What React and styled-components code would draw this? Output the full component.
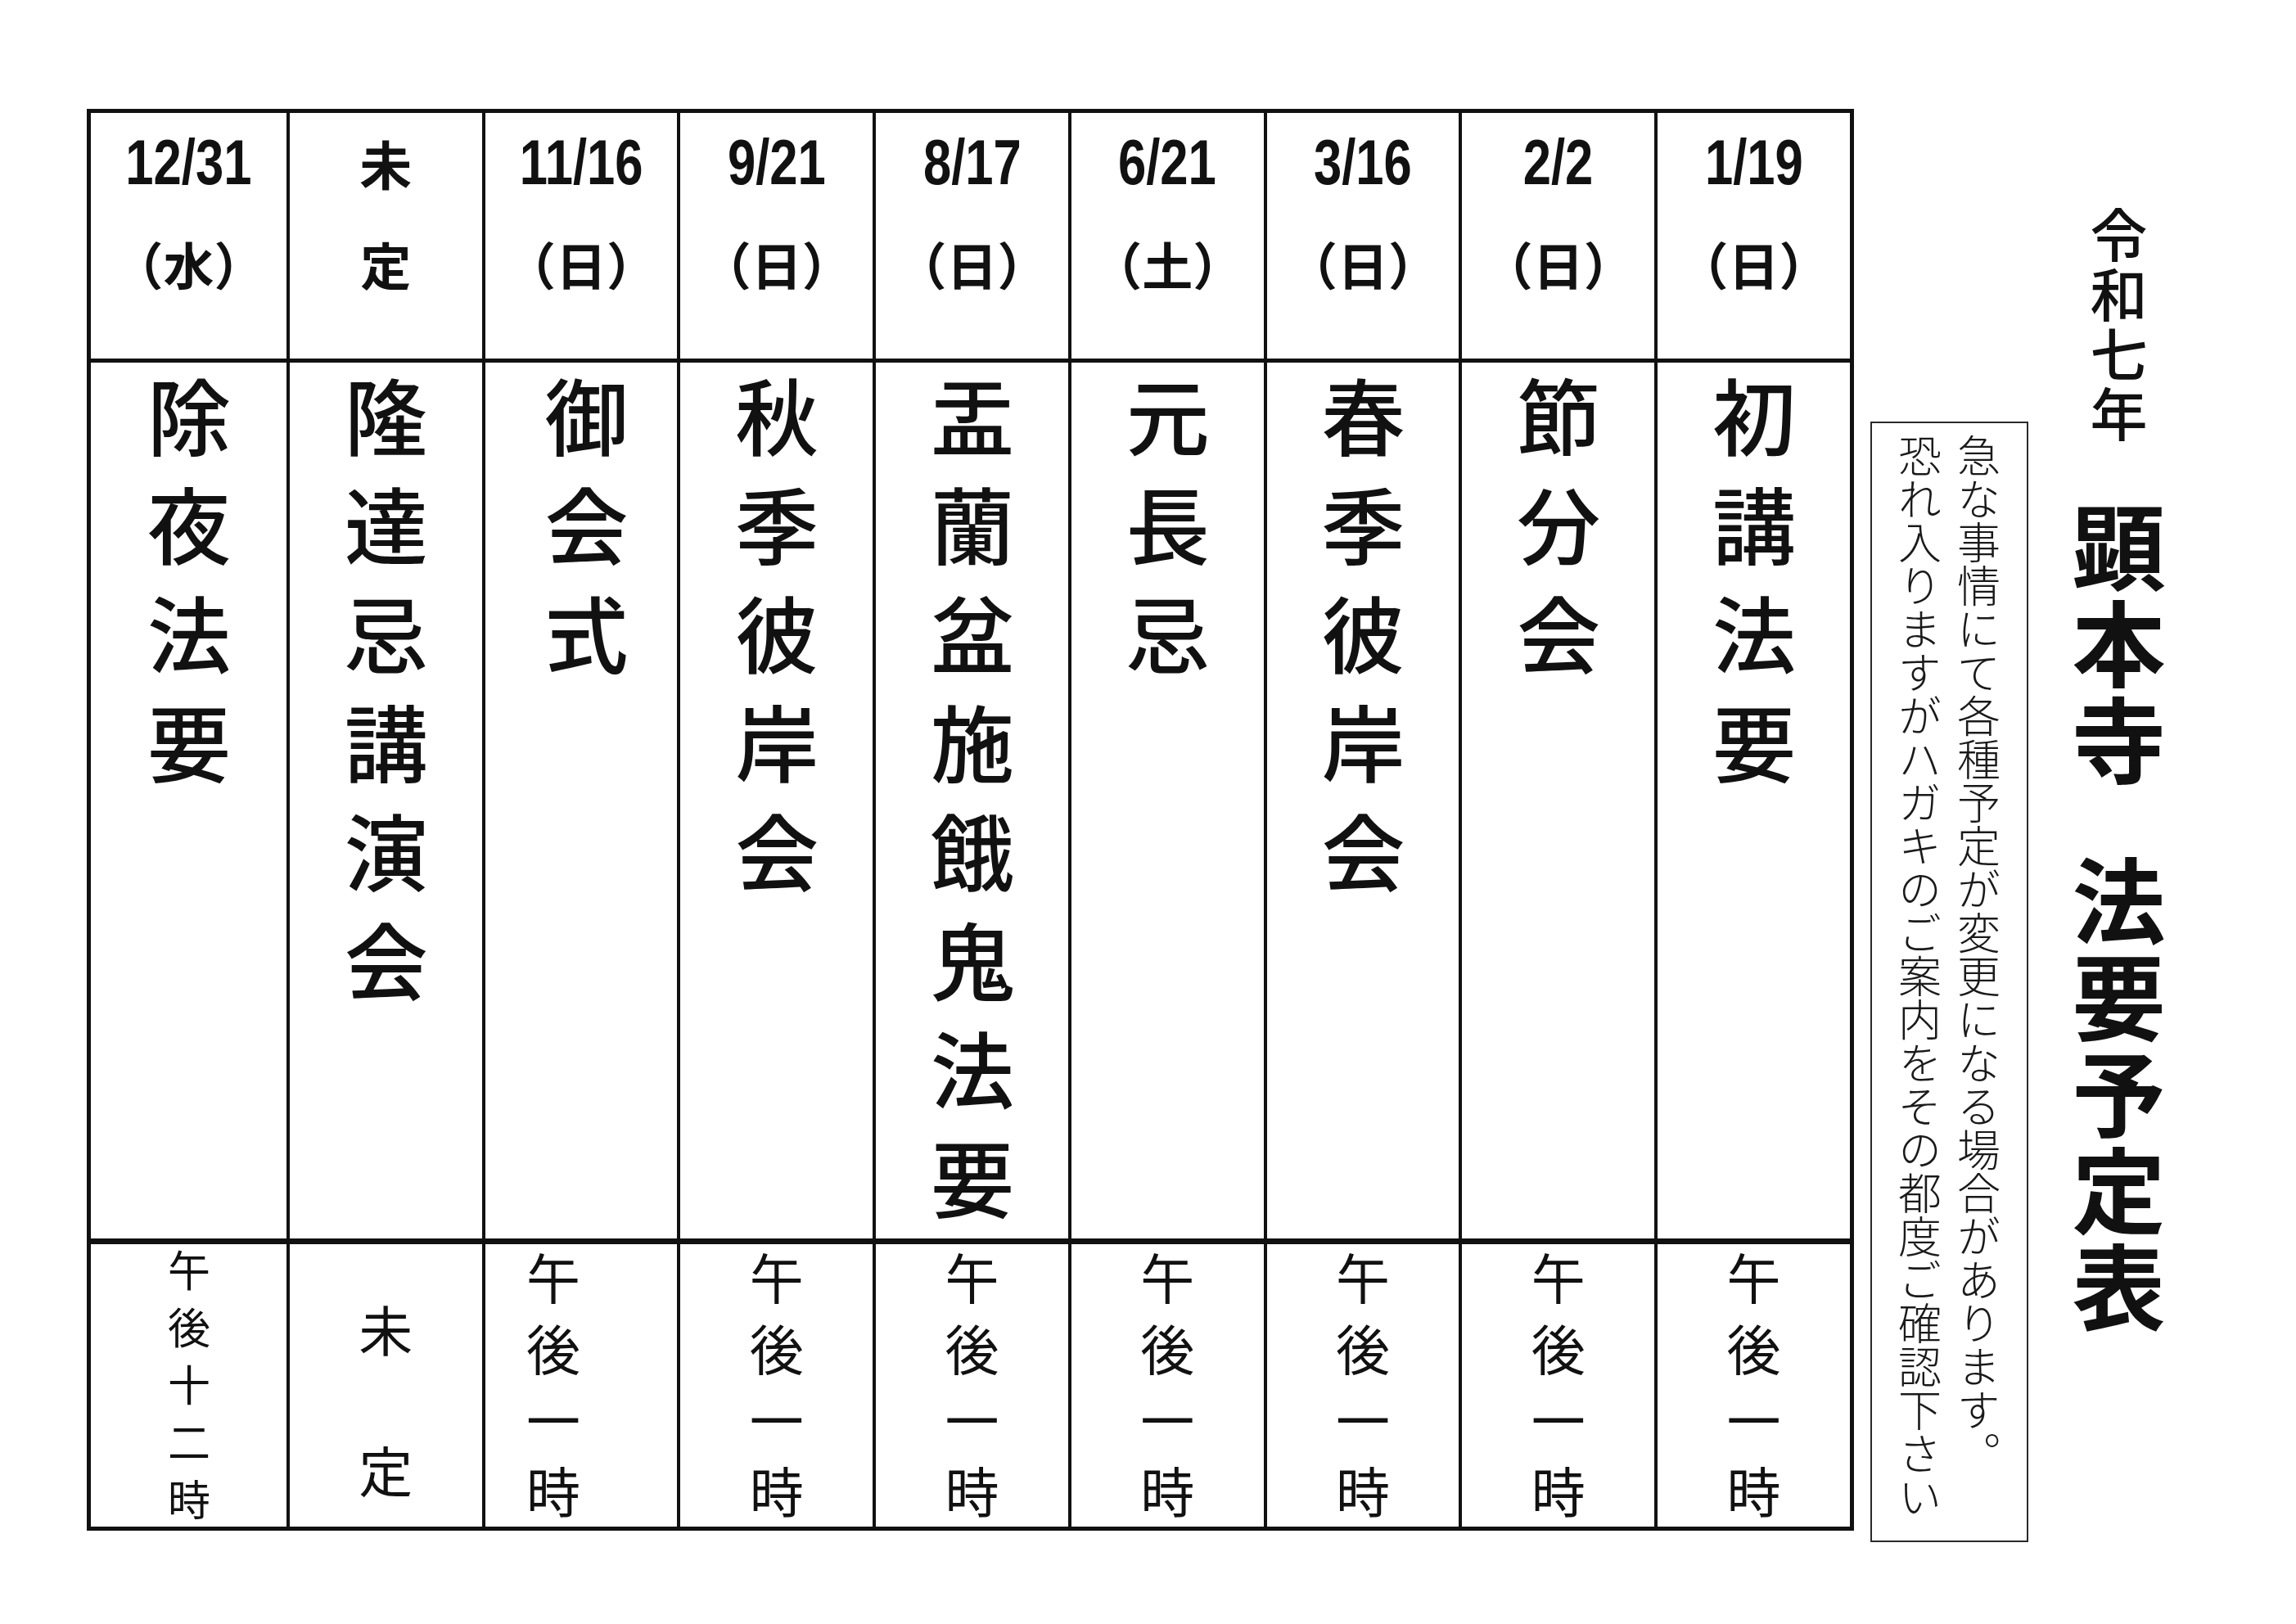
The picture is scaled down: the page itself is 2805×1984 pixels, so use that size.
import React from "react";
import styled, { createGlobalStyle } from "styled-components";

const GlobalStyle = createGlobalStyle`
  html, body {
    margin: 0;
    padding: 0;
    background: #ffffff;
  }
  body {
    font-family: "Noto Sans CJK JP", "Noto Sans", sans-serif;
    color: #111;
  }
`;

const CJK = `"Noto Sans CJK JP", "Noto Sans CJK SC", sans-serif`;

const Page = styled.main`
  width: 2805px;
  height: 1984px;
  box-sizing: border-box;
  display: flex;
  align-items: flex-start;
  padding: 133px 0 0 106px;
  background: #fff;
`;

const Schedule = styled.section`
  display: grid;
  grid-template-columns: repeat(9, 1fr);
  grid-template-rows: 300px 1075px 352px;
  grid-auto-flow: column;
  width: 2159px;
  box-sizing: border-box;
  border: 5px solid #111;
  flex: none;
`;

const Cell = styled.div`
  box-sizing: border-box;
  border-left: ${(p) => (p.$first ? 0 : 4)}px solid #111;
  display: flex;
  min-width: 0;
  overflow: visible;
`;

const HeaderCell = styled(Cell)`
  flex-direction: column;
  align-items: center;
  padding-top: 22px;
`;

const DateLabel = styled.span`
  display: inline-block;
  font-family: "Liberation Sans", Arial, sans-serif;
  font-weight: 700;
  font-size: 77px;
  line-height: 76px;
  height: 76px;
  transform: scaleX(0.8);
  white-space: nowrap;
`;

const KanjiLabel = styled.span`
  display: inline-block;
  font-family: ${CJK};
  font-weight: 700;
  font-size: 64px;
  line-height: 76px;
  height: 76px;
`;

const DayLabel = styled.span`
  display: inline-block;
  margin-top: 55px;
  font-family: ${CJK};
  font-weight: 700;
  font-size: 62px;
  line-height: 62px;
  white-space: nowrap;
`;

const BodyCell = styled(Cell)`
  border-top: 5px solid #111;
  justify-content: center;
  align-items: flex-start;
  padding-top: 16px;
`;

const EventName = styled.span`
  flex: none;
  writing-mode: vertical-rl;
  white-space: nowrap;
  font-family: ${CJK};
  font-weight: 500;
  font-size: 102px;
  line-height: 1;
  letter-spacing: 31px;
  margin-left: ${(p) => p.$nudge || 0}px;
`;

const FooterCell = styled(Cell)`
  border-top: 7px solid #111;
  justify-content: center;
  align-items: flex-start;
  padding-top: ${(p) => p.$top}px;
  padding-right: ${(p) => p.$shift || 0}px;
`;

const TimeText = styled.span`
  flex: none;
  writing-mode: vertical-rl;
  white-space: nowrap;
  font-family: ${CJK};
  font-weight: 400;
  font-size: ${(p) => p.$size}px;
  letter-spacing: ${(p) => p.$spacing}px;
  line-height: 1;
`;

const Notice = styled.aside`
  flex: none;
  margin: 382px 0 0 20px;
  width: 193px;
  height: 1369px;
  box-sizing: border-box;
  border: 2px solid #2a2a2a;
  display: flex;
  justify-content: center;
  align-items: flex-start;
  padding-top: 13px;
`;

const NoticeText = styled.p`
  flex: none;
  margin: 0;
  writing-mode: vertical-rl;
  font-family: ${CJK};
  font-weight: 300;
  font-size: 53px;
  line-height: 72px;
  color: #1a1a1a;
  white-space: nowrap;
`;

const TitleBlock = styled.header`
  flex: none;
  width: 124px;
  margin: 119px 0 0 48px;
  display: flex;
  flex-direction: column;
  align-items: center;
`;

const Era = styled.div`
  flex: none;
  writing-mode: vertical-rl;
  white-space: nowrap;
  font-family: ${CJK};
  font-weight: 500;
  font-size: 70px;
  line-height: 1;
  letter-spacing: 3px;
`;

const TitleWord = styled.h1`
  flex: none;
  margin: ${(p) => p.$gap}px 0 0 0;
  writing-mode: vertical-rl;
  white-space: nowrap;
  font-family: ${CJK};
  font-weight: 700;
  font-size: 114px;
  line-height: 1;
  letter-spacing: 4px;
`;

const events = [
  { date: "12/31", day: "（水）", name: "除夜法要", time: "午後十二時", size: 52, spacing: 18, top: 6 },
  { date: "未", day: "定", kanji: true, name: "隆達忌講演会", time: "未　定", size: 66, spacing: 20, top: 73 },
  { date: "11/16", day: "（日）", name: "御会式", time: "午後一時", size: 66, spacing: 21, top: 9, shift: 68, nudge: 12 },
  { date: "9/21", day: "（日）", name: "秋季彼岸会", time: "午後一時", size: 66, spacing: 21, top: 9 },
  { date: "8/17", day: "（日）", name: "盂蘭盆施餓鬼法要", time: "午後一時", size: 66, spacing: 21, top: 9 },
  { date: "6/21", day: "（土）", name: "元長忌", time: "午後一時", size: 66, spacing: 21, top: 9 },
  { date: "3/16", day: "（日）", name: "春季彼岸会", time: "午後一時", size: 66, spacing: 21, top: 9 },
  { date: "2/2", day: "（日）", name: "節分会", time: "午後一時", size: 66, spacing: 21, top: 9 },
  { date: "1/19", day: "（日）", name: "初講法要", time: "午後一時", size: 66, spacing: 21, top: 9 },
];

export default function App() {
  return (
    <>
      <GlobalStyle />
      <Page>
        <Schedule>
          {events.map((e, i) => (
            <React.Fragment key={e.name}>
              <HeaderCell $first={i === 0}>
                {e.kanji ? <KanjiLabel>{e.date}</KanjiLabel> : <DateLabel>{e.date}</DateLabel>}
                <DayLabel>{e.day}</DayLabel>
              </HeaderCell>
              <BodyCell $first={i === 0}>
                <EventName $nudge={e.nudge}>{e.name}</EventName>
              </BodyCell>
              <FooterCell $first={i === 0} $top={e.top} $shift={e.shift}>
                <TimeText $size={e.size} $spacing={e.spacing}>
                  {e.time}
                </TimeText>
              </FooterCell>
            </React.Fragment>
          ))}
        </Schedule>
        <Notice>
          <NoticeText>
            　急な事情にて各種予定が変更になる場合があります。
            <br />
            恐れ入りますがハガキのご案内をその都度ご確認下さい
          </NoticeText>
        </Notice>
        <TitleBlock>
          <Era>令和七年</Era>
          <TitleWord $gap={68}>顕本寺</TitleWord>
          <TitleWord $gap={78}>法要予定表</TitleWord>
        </TitleBlock>
      </Page>
    </>
  );
}
